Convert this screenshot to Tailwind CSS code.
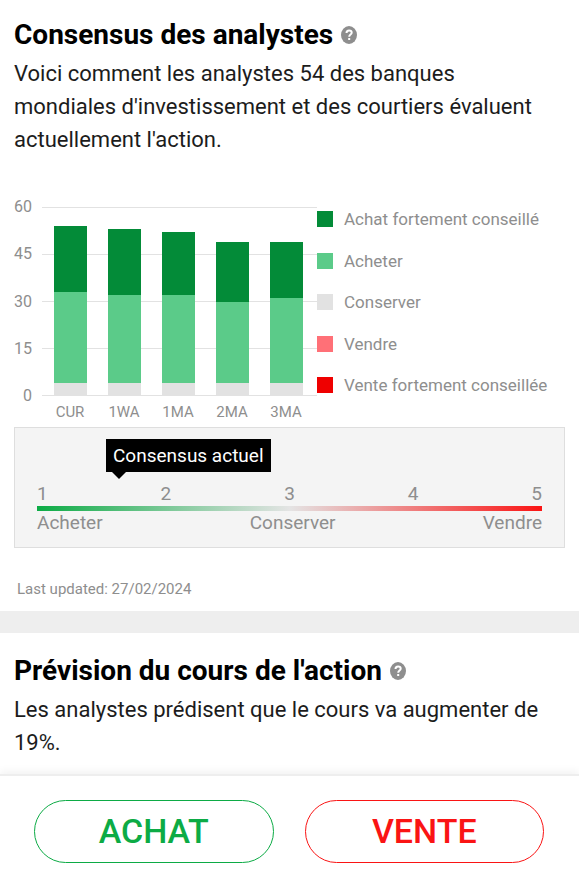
<!DOCTYPE html>
<html lang="fr">
  <head>
    <meta charset="UTF-8" />
    <meta name="viewport" content="width=device-width, initial-scale=1.0" />
    <script src="https://cdn.jsdelivr.net/npm/@tailwindcss/browser@4"></script>
    <title>Consensus des analystes</title>
  </head>
  <body class="min-h-screen flex flex-col bg-white font-[Roboto,sans-serif] text-[#1c1c1c]">
    <main class="flex-1">
      <!-- Consensus -->
      <section class="px-3.5 pt-[17px] pb-3">
        <div class="flex items-center gap-2">
          <h2 class="text-[28px] leading-9 font-bold text-black">Consensus des analystes</h2>
          <button type="button" aria-label="Aide sur le consensus">
            <svg class="w-4 h-[18px]" viewBox="0 0 16 18" preserveAspectRatio="none">
              <ellipse cx="8" cy="9" rx="8" ry="9" fill="#8e8e8e" />
              <path d="M5.500 7C5.500 5.400 6.500 4.400 8.100 4.400s2.600.9 2.600 2.300c0 1.900-2.500 1.900-2.500 4M8.200 12v2" fill="none" stroke="#fff" stroke-width="2" />
            </svg>
          </button>
        </div>
        <p class="mt-1 pr-3 text-[22px] leading-[33px]">
          Voici comment les analystes 54 des banques mondiales d'investissement et des courtiers évaluent actuellement l'action.
        </p>

        <!-- Chart -->
        <div class="mt-[41px] flex text-base text-[#8e8e8e]">
          <div class="w-[18px] h-[209px] flex flex-col justify-between text-right leading-5">
            <span>60</span>
            <span>45</span>
            <span>30</span>
            <span>15</span>
            <span>0</span>
          </div>
          <div class="flex-1 ml-2.5 pt-2.5">
            <div class="relative h-[189px]">
              <div class="absolute inset-0 flex flex-col justify-between">
                <div class="h-px bg-[#e2e2e2]"></div>
                <div class="h-px bg-[#e2e2e2]"></div>
                <div class="h-px bg-[#e2e2e2]"></div>
                <div class="h-px bg-[#e2e2e2]"></div>
                <div class="h-px bg-[#e2e2e2]"></div>
              </div>
              <div id="bars" class="relative h-full pl-3 pr-3.5 flex items-end gap-[21px]"></div>
            </div>
            <div id="periods" class="mt-1.5 pl-px pr-1 flex text-center text-[15px] leading-5"></div>
          </div>
          <ul class="w-[248px] h-[208px] pt-2.5 pb-2 flex flex-col justify-between text-[17px] leading-6">
            <li class="flex items-center gap-[11px]"><span class="size-4 bg-[#038b38]"></span>Achat fortement conseillé</li>
            <li class="flex items-center gap-[11px]"><span class="size-4 bg-[#5bcb89]"></span>Acheter</li>
            <li class="flex items-center gap-[11px]"><span class="size-4 bg-[#e2e2e2]"></span>Conserver</li>
            <li class="flex items-center gap-[11px]"><span class="size-4 bg-[#ff7077]"></span>Vendre</li>
            <li class="flex items-center gap-[11px]"><span class="size-4 bg-[#ef0000]"></span>Vente fortement conseillée</li>
          </ul>
        </div>

        <!-- Scale -->
        <div class="mt-[5px] border border-[#dedede] bg-[#f4f4f4] px-[22px] pt-[11px] pb-3 text-[19px] text-[#8e8e8e]">
          <div class="relative ml-[69px] w-fit bg-black px-[7px] leading-[33px] text-white">
            Consensus actuel
            <span class="absolute left-1.5 top-full border-x-[7px] border-t-[7px] border-x-transparent border-t-black"></span>
          </div>
          <div class="mt-2.5 flex justify-between leading-6">
            <span>1</span>
            <span>2</span>
            <span>3</span>
            <span>4</span>
            <span>5</span>
          </div>
          <div class="h-[5px] bg-linear-to-r/srgb from-[#0cab45] via-[#e4e4e4] to-[#fa1414]"></div>
          <div class="flex justify-between leading-6">
            <span>Acheter</span>
            <span>Conserver</span>
            <span>Vendre</span>
          </div>
        </div>
        <p class="mt-[31px] ml-[3px] text-[15px] leading-5 text-[#8e8e8e]">Last updated: 27/02/2024</p>
      </section>

      <div class="h-[22px] bg-[#eeeeee]"></div>

      <!-- Price forecast -->
      <section class="px-3.5 pt-5 pb-3">
        <div class="flex items-center gap-2">
          <h2 class="text-[28px] leading-9 font-bold text-black">Prévision du cours de l'action</h2>
          <button type="button" aria-label="Aide sur la prévision">
            <svg class="w-4 h-[18px]" viewBox="0 0 16 18" preserveAspectRatio="none">
              <ellipse cx="8" cy="9" rx="8" ry="9" fill="#8e8e8e" />
              <path d="M5.500 7C5.500 5.400 6.500 4.400 8.100 4.400s2.600.9 2.600 2.300c0 1.900-2.500 1.900-2.500 4M8.200 12v2" fill="none" stroke="#fff" stroke-width="2" />
            </svg>
          </button>
        </div>
        <p class="mt-1 pr-3 text-[22px] leading-[33px]">Les analystes prédisent que le cours va augmenter de 19%.</p>
      </section>
    </main>

    <footer class="border-t-2 border-[#eeeeee] bg-white shadow-[0_-3px_8px_rgba(0,0,0,0.05)] pl-[34px] pr-[35px] pt-6 pb-[15px] flex gap-[31px] text-[34px] font-medium">
      <button type="button" class="flex-1 h-[63px] rounded-full border border-[#0cab45] text-[#0cab45]">ACHAT</button>
      <button type="button" class="flex-1 h-[63px] rounded-full border border-[#fa1414] text-[#fa1414]">VENTE</button>
    </footer>

    <script>
      const MAX = 60;
      const data = [
        { period: "CUR", strongBuy: 21, buy: 29, hold: 4 },
        { period: "1WA", strongBuy: 21, buy: 28, hold: 4 },
        { period: "1MA", strongBuy: 20, buy: 28, hold: 4 },
        { period: "2MA", strongBuy: 19, buy: 26, hold: 4 },
        { period: "3MA", strongBuy: 18, buy: 27, hold: 4 },
      ];

      let bars = "";
      let periods = "";

      data.forEach((item) => {
        bars += `
          <div class="flex-1 h-full flex flex-col justify-end">
            <div class="bg-[#038b38]" style="height: ${(item.strongBuy / MAX) * 100}%"></div>
            <div class="bg-[#5bcb89]" style="height: ${(item.buy / MAX) * 100}%"></div>
            <div class="bg-[#e2e2e2]" style="height: ${(item.hold / MAX) * 100}%"></div>
          </div>
        `;
        periods += `<span class="flex-1">${item.period}</span>`;
      });

      document.querySelector("#bars").innerHTML = bars;
      document.querySelector("#periods").innerHTML = periods;
    </script>
  </body>
</html>
